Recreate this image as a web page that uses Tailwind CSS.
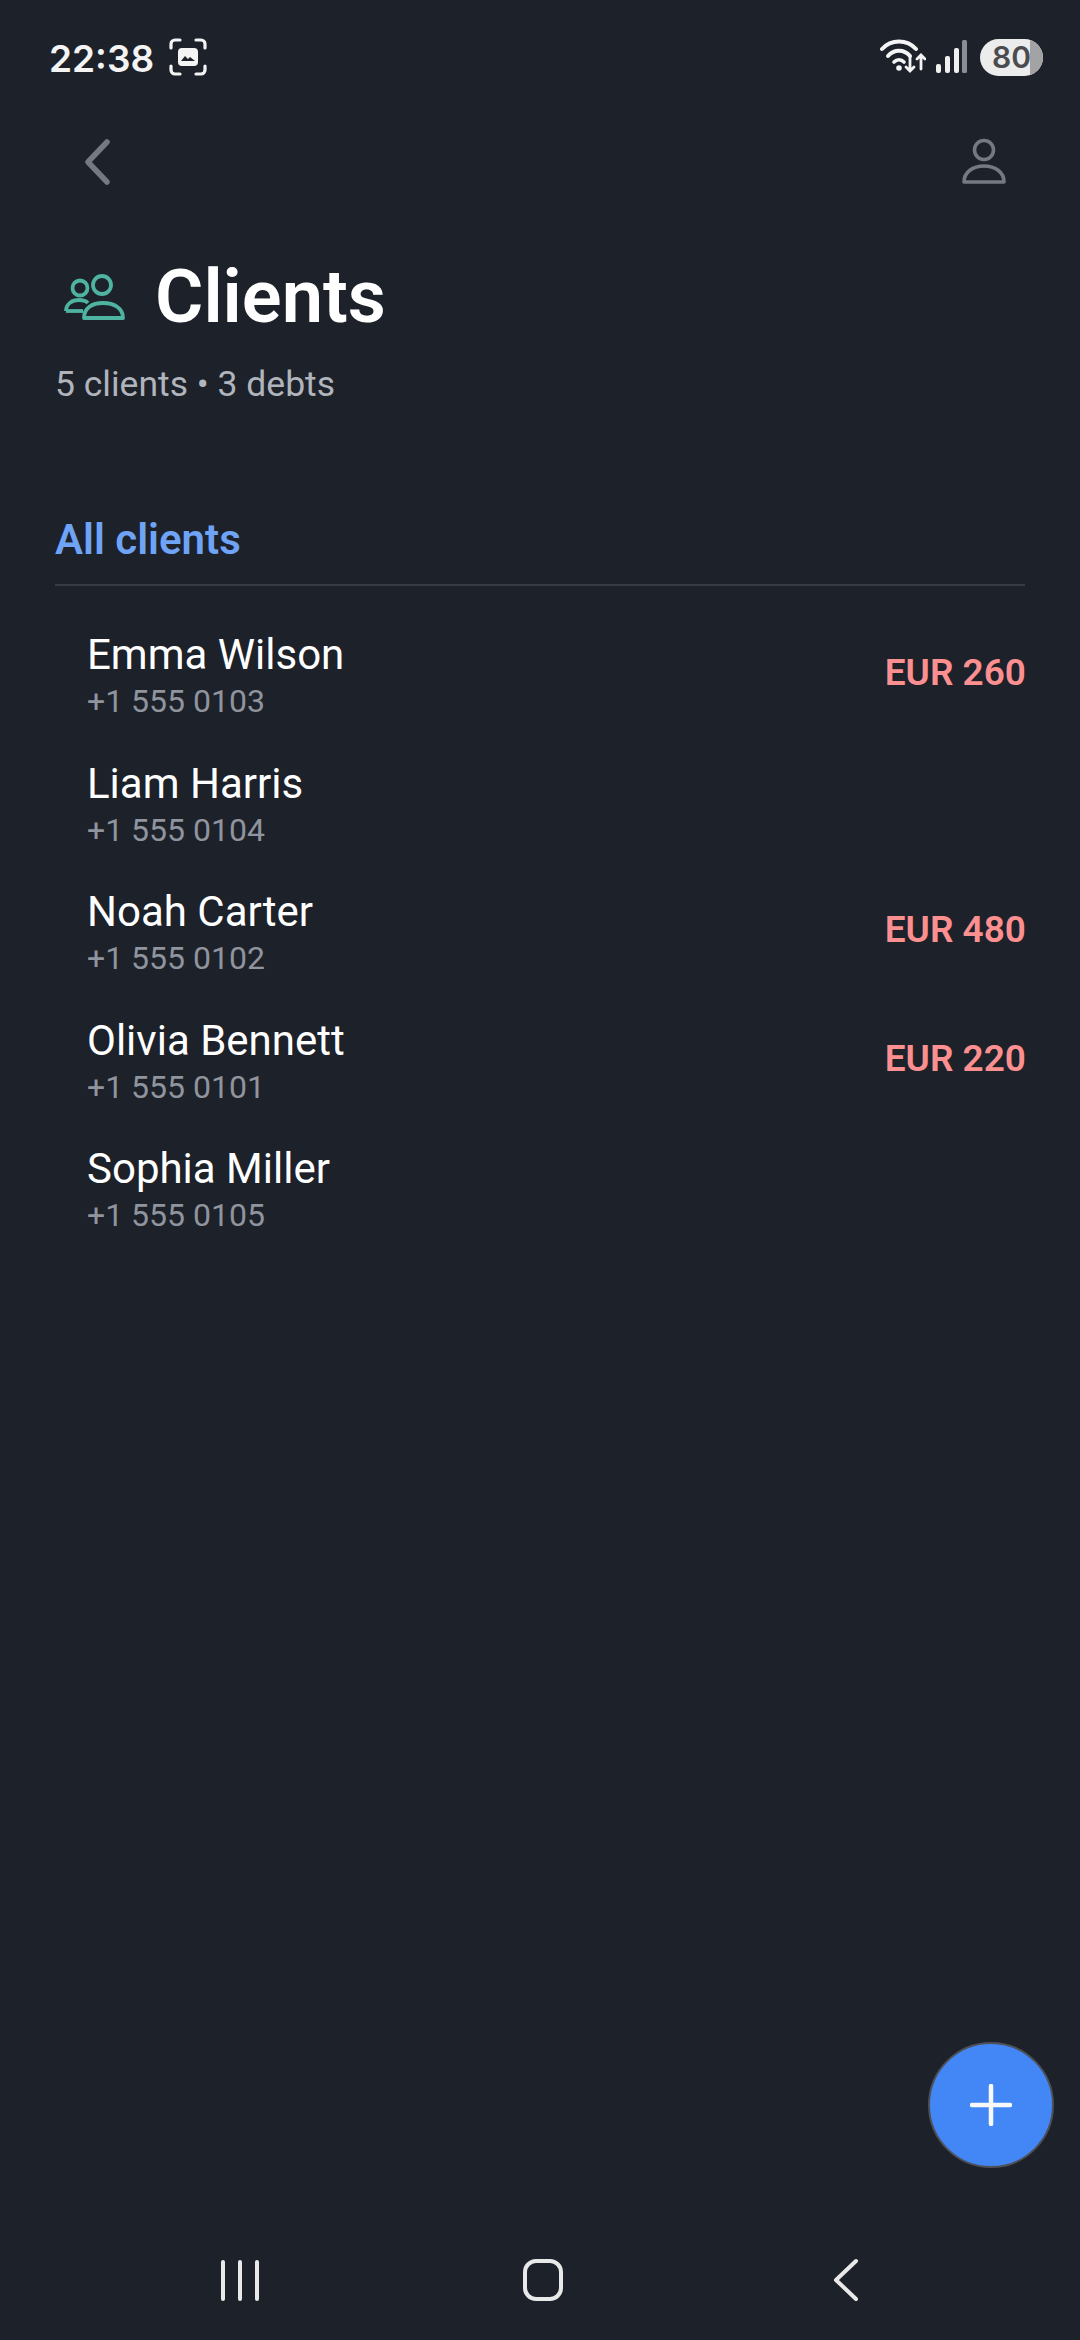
<!DOCTYPE html>
<html>
<head>
<meta charset="utf-8">
<script src="https://cdn.jsdelivr.net/npm/@tailwindcss/browser@4"></script>
</head>
<body class="m-0">
<div class="relative w-[1080px] h-[2340px] bg-[#1d212a] font-['Roboto',sans-serif] overflow-hidden flex flex-col">
  <!-- status bar -->
  <div class="h-[116px] shrink-0 flex items-center justify-between pl-[49px] pr-[37px]">
    <div class="flex items-center gap-[15px]">
      <span class="font-['Inter',sans-serif] font-semibold text-[37px] leading-none text-[#f4f4f5]">22:38</span>
      <svg width="38" height="38" viewBox="0 0 38 38" fill="none" stroke="#f4f4f5" stroke-width="3.2" stroke-linecap="round" class="-mt-[3px]">
        <path d="M2 10V6a4 4 0 0 1 4-4h5M27 2h5a4 4 0 0 1 4 4v4M36 28v4a4 4 0 0 1-4 4h-5M11 36H6a4 4 0 0 1-4-4v-4"/>
        <rect x="9" y="10" width="20" height="18" rx="4" fill="#f4f4f5" stroke="none"/>
        <path d="M12 23l4-5 3 3 2-2 5 4z" fill="#1d212a" stroke="none"/>
      </svg>
    </div>
    <div class="flex items-center">
      <svg width="46" height="36" viewBox="0 0 46 36" fill="none" stroke="#f4f4f5" stroke-linecap="round" class="mr-[9px] -mt-[2px]">
        <path d="M2 10C11 0 27 0 36 10" stroke-width="4"/>
        <path d="M8 17C14 10 24 10 30 17" stroke-width="4"/>
        <path d="M14 23C17 20 21 20 24 23" stroke-width="3.6"/>
        <circle cx="19" cy="29" r="2.8" fill="#f4f4f5" stroke="none"/>
        <path d="M30 17V32M26 28l4 4 4-4" stroke-width="2.8"/>
        <path d="M41 30V16M37 20l4-4 4 4" stroke-width="2.8"/>
      </svg>
      <svg width="32" height="34" viewBox="0 0 32 34" class="mr-[13px] -mt-[2px]">
        <rect x="1" y="24" width="5" height="9" rx="2" fill="#f0f0f0"/>
        <rect x="10" y="16" width="5" height="17" rx="2" fill="#f0f0f0"/>
        <rect x="19" y="8" width="5" height="25" rx="2" fill="#f0f0f0"/>
        <rect x="27" y="0" width="5" height="33" rx="1.5" fill="#8a8d93"/>
      </svg>
      <div class="relative w-[63px] h-[37px] -mt-[2px] rounded-full overflow-hidden bg-[#ececec] flex items-center justify-center">
        <div class="absolute right-0 top-0 bottom-0 w-[13px] bg-[#a3a3a6]"></div>
        <span class="relative font-['Inter',sans-serif] font-semibold text-[30px] leading-none text-[#4b4c50]">80</span>
      </div>
    </div>
  </div>

  <!-- top nav -->
  <div class="h-[92px] shrink-0 flex items-center justify-between pl-[84px] pr-[74px]">
    <svg width="26" height="46" viewBox="0 0 26 46" fill="none" stroke="#747982" stroke-width="5.5" stroke-linecap="round" stroke-linejoin="round">
      <path d="M23 3L4 23L23 43"/>
    </svg>
    <svg width="44" height="46" viewBox="0 0 44 46" fill="none" stroke="#747982" stroke-width="3.6" stroke-linejoin="round" class="-mt-[3px]">
      <circle cx="22" cy="12" r="9.5"/>
      <path d="M2 44C2 34 11 28 22 28S42 34 42 44Z"/>
    </svg>
  </div>

  <!-- title -->
  <div class="mt-[48px] pl-[63px] flex items-center gap-[30px] h-[82px]">
    <svg width="62" height="46" viewBox="0 0 62 46" fill="none" stroke="#4fb3a2" stroke-width="3.8" stroke-linejoin="round">
      <circle cx="17" cy="14" r="7.5"/>
      <circle cx="39" cy="11" r="9"/>
      <path d="M3 37C3 30 9 26 16 26C20 26 23 27 25 29"/>
      <path d="M3 37H20"/>
      <path d="M21 44C21 34 29 29 40 29S60 34 60 44Z"/>
    </svg>
    <h1 class="text-[74px] leading-none font-semibold text-white">Clients</h1>
  </div>
  <p class="mt-[26px] pl-[55px] text-[35.5px] leading-[40px] text-[#b0b4bc]">5 clients • 3 debts</p>

  <!-- section -->
  <div class="mt-[114px] mx-[55px] border-b-2 border-[#373b44] pb-[22px]">
    <h2 class="text-[42px] leading-[44px] font-semibold text-[#6ea3f5]">All clients</h2>
  </div>

  <!-- list -->
  <div class="mt-[41px] ml-[87px] mr-[54px] flex flex-col">
    <div class="h-[128.6px] flex items-start justify-between pt-[4px]">
      <div><div class="text-[42px] leading-[48px] text-white">Emma Wilson</div><div class="text-[32px] leading-[38px] mt-[3px] text-[#90949d]">+1 555 0103</div></div>
      <div class="text-[37px] leading-[44px] mt-[20px] font-semibold text-[#fc8f8f]">EUR 260</div>
    </div>
    <div class="h-[128.6px] flex items-start justify-between pt-[4px]">
      <div><div class="text-[42px] leading-[48px] text-white">Liam Harris</div><div class="text-[32px] leading-[38px] mt-[3px] text-[#90949d]">+1 555 0104</div></div>
    </div>
    <div class="h-[128.6px] flex items-start justify-between pt-[4px]">
      <div><div class="text-[42px] leading-[48px] text-white">Noah Carter</div><div class="text-[32px] leading-[38px] mt-[3px] text-[#90949d]">+1 555 0102</div></div>
      <div class="text-[37px] leading-[44px] mt-[20px] font-semibold text-[#fc8f8f]">EUR 480</div>
    </div>
    <div class="h-[128.6px] flex items-start justify-between pt-[4px]">
      <div><div class="text-[42px] leading-[48px] text-white">Olivia Bennett</div><div class="text-[32px] leading-[38px] mt-[3px] text-[#90949d]">+1 555 0101</div></div>
      <div class="text-[37px] leading-[44px] mt-[20px] font-semibold text-[#fc8f8f]">EUR 220</div>
    </div>
    <div class="h-[128.6px] flex items-start justify-between pt-[4px]">
      <div><div class="text-[42px] leading-[48px] text-white">Sophia Miller</div><div class="text-[32px] leading-[38px] mt-[3px] text-[#90949d]">+1 555 0105</div></div>
    </div>
  </div>

  <!-- FAB -->
  <button class="absolute left-[928px] top-[2042px] w-[126px] h-[126px] rounded-full bg-[#4287f5] border-2 border-[#4d5056] flex items-center justify-center">
    <svg width="42" height="42" viewBox="0 0 42 42" stroke="#f8f8f8" stroke-width="4.5" stroke-linecap="round"><path d="M21 2V40M2 21H40"/></svg>
  </button>

  <!-- nav bar -->
  <div class="absolute left-0 right-0 top-[2230px] h-[100px]">
    <div class="absolute left-[221px] top-[30px] flex gap-[13px]">
      <div class="w-[4px] h-[41px] rounded-full bg-[#e9e9e9]"></div>
      <div class="w-[4px] h-[41px] rounded-full bg-[#e9e9e9]"></div>
      <div class="w-[4px] h-[41px] rounded-full bg-[#e9e9e9]"></div>
    </div>
    <div class="absolute left-[523px] top-[29px] w-[40px] h-[42px] rounded-[13px] border-[4px] border-[#e9e9e9]"></div>
    <svg class="absolute left-[832px] top-[28px]" width="28" height="44" viewBox="0 0 28 44" fill="none" stroke="#e9e9e9" stroke-width="4" stroke-linecap="round" stroke-linejoin="round"><path d="M24 3L4 22L24 41" /></svg>
  </div>
</div>
</body>
</html>
